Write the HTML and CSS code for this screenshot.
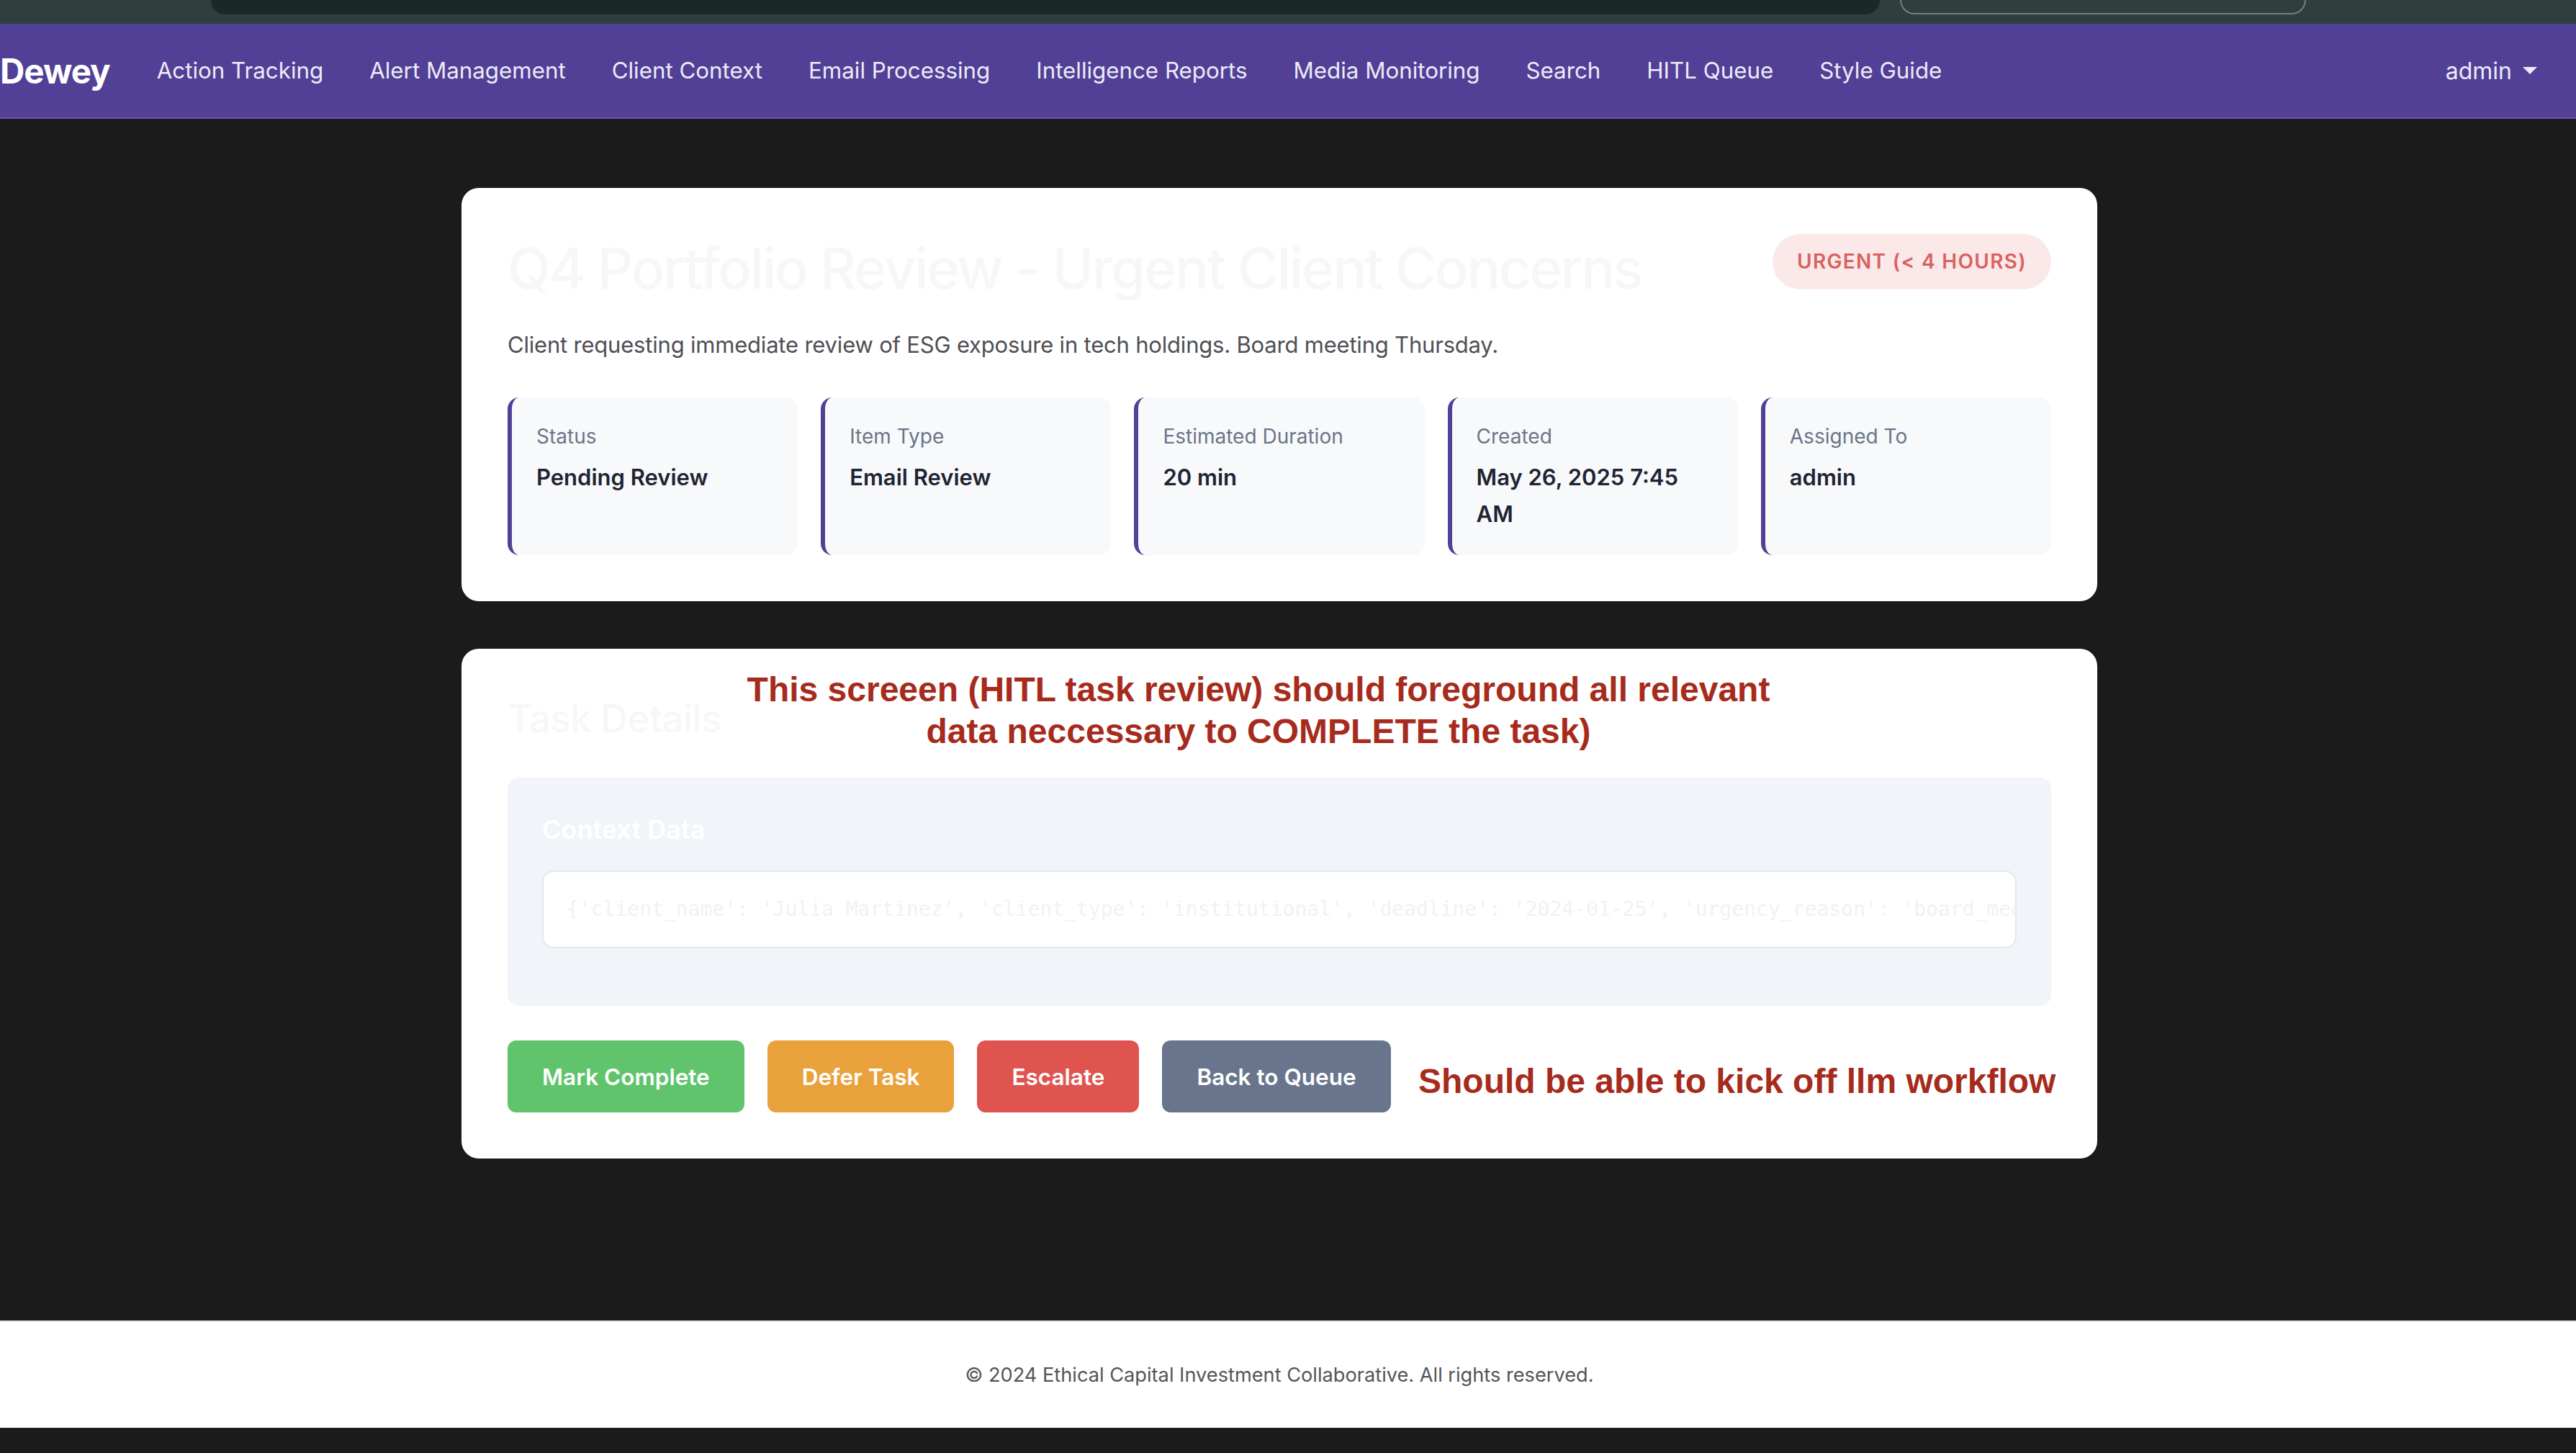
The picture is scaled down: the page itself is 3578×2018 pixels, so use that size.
FILE: index.html
```html
<!DOCTYPE html>
<html lang="en">
<head>
<meta charset="utf-8">
<title>Dewey - HITL Task Review</title>
<link rel="stylesheet" href="styles.css">
</head>
<body>
<div class="chrome">
  <div class="urlbar"></div>
  <div class="pill"></div>
</div>
<nav class="navbar">
  <a class="brand" href="#">Dewey</a>
  <ul class="nav-links">
    <li><a href="#">Action Tracking</a></li>
    <li><a href="#">Alert Management</a></li>
    <li><a href="#">Client Context</a></li>
    <li><a href="#">Email Processing</a></li>
    <li><a href="#">Intelligence Reports</a></li>
    <li><a href="#">Media Monitoring</a></li>
    <li><a href="#">Search</a></li>
    <li><a href="#">HITL Queue</a></li>
    <li><a href="#">Style Guide</a></li>
  </ul>
  <a class="user" href="#">admin<span class="caret"></span></a>
</nav>

<main class="page">
  <section class="card">
    <div class="card-header">
      <h1 class="title">Q4 Portfolio Review - Urgent Client Concerns</h1>
      <span class="badge">URGENT (&lt; 4 HOURS)</span>
    </div>
    <p class="desc">Client requesting immediate review of ESG exposure in tech holdings. Board meeting Thursday.</p>
    <div class="info-grid">
      <div class="info">
        <div class="info-label">Status</div>
        <div class="info-value">Pending Review</div>
      </div>
      <div class="info">
        <div class="info-label">Item Type</div>
        <div class="info-value">Email Review</div>
      </div>
      <div class="info">
        <div class="info-label">Estimated Duration</div>
        <div class="info-value">20 min</div>
      </div>
      <div class="info">
        <div class="info-label">Created</div>
        <div class="info-value">May 26, 2025 7:45 AM</div>
      </div>
      <div class="info">
        <div class="info-label">Assigned To</div>
        <div class="info-value">admin</div>
      </div>
    </div>
  </section>

  <section class="card card-task">
    <h2 class="section-title">Task Details</h2>
    <div class="context">
      <h4 class="context-title">Context Data</h4>
      <pre class="code">{'client_name': 'Julia Martinez', 'client_type': 'institutional', 'deadline': '2024-01-25', 'urgency_reason': 'board_mee</pre>
    </div>
    <div class="actions">
      <button class="btn btn-green">Mark Complete</button>
      <button class="btn btn-orange">Defer Task</button>
      <button class="btn btn-red">Escalate</button>
      <button class="btn btn-slate">Back to Queue</button>
    </div>
    <div class="note note-top">This screeen (HITL task review) should foreground all relevant<br>data neccessary to COMPLETE the task)</div>
    <div class="note note-side">Should be able to kick off llm workflow</div>
  </section>
</main>

<footer class="footer">
  <p>© 2024 Ethical Capital Investment Collaborative. All rights reserved.</p>
</footer>
</body>
</html>
```

FILE: styles.css
```css
html {
  background: #1b1b1b;
}
body {
  margin: 0;
  background: #1b1b1b;
  font-family: Inter, "Noto Sans", "Liberation Sans", sans-serif;
  color: #1e2433;
}

/* browser chrome remnant */
.chrome {
  height: 33px;
  background: #2e3f3d;
  display: flex;
  align-items: flex-start;
  padding-left: 293px;
}
.urlbar {
  width: 2318px;
  height: 20px;
  background: #1a2927;
  border-radius: 0 0 22px 22px;
}
.pill {
  width: 560px;
  height: 18px;
  margin-left: 28px;
  border: 2px solid #7a7f7d;
  border-top: none;
  border-radius: 0 0 22px 22px;
}

/* navbar */
.navbar {
  height: 130px;
  background: #523f96;
  border-bottom: 2px solid #6a54b0;
  display: flex;
  align-items: center;
  padding-right: 54px;
}
.brand {
  font-size: 47.5px;
  font-weight: 700;
  color: #ffffff;
  text-decoration: none;
  letter-spacing: -1px;
  margin-right: 33px;
}
.nav-links {
  list-style: none;
  margin: 0;
  padding: 0;
  display: flex;
}
.nav-links a {
  display: block;
  padding: 0 32px;
  font-size: 31.3px;
  color: #ecebf6;
  text-decoration: none;
}
.user {
  margin-left: auto;
  font-size: 32px;
  color: #ecebf6;
  text-decoration: none;
  display: flex;
  align-items: center;
}
.caret {
  width: 0;
  height: 0;
  margin-left: 15px;
  border-top: 10px solid #ecebf6;
  border-left: 10px solid transparent;
  border-right: 10px solid transparent;
}

/* main */
.page {
  width: 2272px;
  padding: 96px 0 0;
  margin: 0 0 225px 641px;
  display: flex;
  flex-direction: column;
  gap: 66px;
}
.card {
  background: #ffffff;
  border-radius: 24px;
  padding: 64px;
}
.card-task {
  position: relative;
}
.card-header {
  display: flex;
  justify-content: space-between;
  align-items: flex-start;
  margin-bottom: 32px;
}
.title {
  margin: 0;
  font-size: 78px;
  line-height: 96px;
  font-weight: 500;
  color: #f6f7f9;
  letter-spacing: -2.5px;
}
.badge {
  display: inline-block;
  background: #fbe9e9;
  color: #d9625f;
  font-size: 28px;
  font-weight: 600;
  letter-spacing: 1.3px;
  line-height: 77px;
  height: 77px;
  padding: 0 34px;
  border-radius: 40px;
}
.desc {
  margin: 0 0 48px;
  font-size: 31px;
  line-height: 51px;
  letter-spacing: -0.2px;
  color: #4f4f55;
}
.info-grid {
  display: grid;
  grid-template-columns: repeat(5, 1fr);
  gap: 32px;
}
.info {
  background: #f8f9fb;
  border-left: 6px solid #523f96;
  border-radius: 16px;
  padding: 32px 32px 32px 34px;
}
.info-label {
  font-size: 28px;
  line-height: 45px;
  color: #6b7589;
  margin-bottom: 8px;
}
.info-value {
  font-size: 31px;
  line-height: 51px;
  font-weight: 600;
  color: #1e2433;
}

.section-title {
  margin: 0 0 48px;
  font-size: 53px;
  line-height: 67px;
  font-weight: 500;
  letter-spacing: -0.8px;
  color: #f6f7f9;
}
.context {
  background: #f1f4f8;
  border-radius: 16px;
  padding: 48px;
  margin-bottom: 48px;
}
.context-title {
  margin: 0 0 32px;
  font-size: 36px;
  line-height: 49px;
  font-weight: 600;
  color: #ffffff;
}
.code {
  margin: 0 0 32px;
  background: #ffffff;
  border: 2px solid #e2e8f0;
  border-radius: 16px;
  padding: 32px;
  font-family: "DejaVu Sans Mono", "Liberation Mono", monospace;
  font-size: 28px;
  line-height: 40px;
  color: #f0f2f5;
  white-space: pre;
  overflow: hidden;
}
.actions {
  display: flex;
  gap: 32px;
}
.btn {
  height: 100px;
  padding: 0 48px;
  border: none;
  border-radius: 12px;
  font-family: Inter, "Liberation Sans", sans-serif;
  font-size: 31.5px;
  font-weight: 600;
  color: #ffffff;
}
.btn-green { background: #5fc46c; }
.btn-orange { background: #e9a23b; }
.btn-red { background: #e05450; }
.btn-slate { background: #68758c; }

.note {
  position: absolute;
  font-family: "Liberation Sans", Arial, sans-serif;
  font-weight: 700;
  font-size: 48px;
  line-height: 58px;
  color: #a72b1c;
  white-space: nowrap;
}
.note-top {
  top: 28px;
  left: 1107px;
  transform: translateX(-50%);
  text-align: center;
}
.note-side {
  top: 572px;
  left: 1329px;
}

.footer {
  background: #ffffff;
  border-top: 2px solid #e4e4e4;
  padding: 51px 24px 51px 0;
  text-align: center;
}
.footer p {
  margin: 0;
  font-size: 27.2px;
  line-height: 45px;
  color: #555555;
}
```
